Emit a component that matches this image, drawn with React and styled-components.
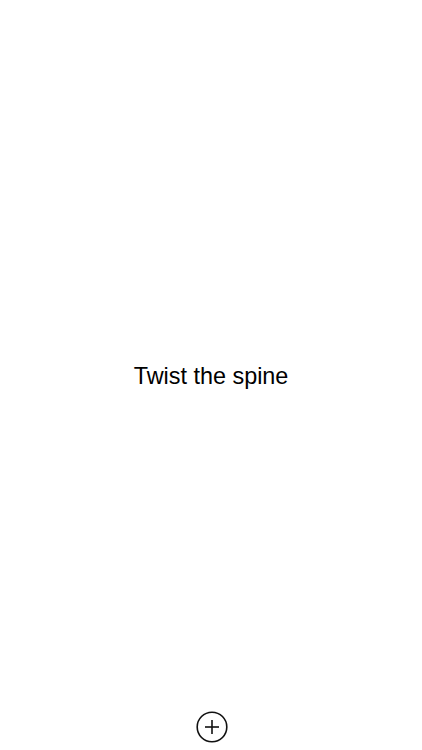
import React from 'react';
import styled, { createGlobalStyle } from 'styled-components';

const GlobalStyle = createGlobalStyle`
  html, body {
    margin: 0;
    padding: 0;
    background: #ffffff;
  }
  body {
    font-family: "Liberation Sans", Arial, sans-serif;
    color: #000;
  }
`;

const Screen = styled.div`
  height: 750px;
  width: 100%;
  display: grid;
  grid-template-rows: 1fr auto 1fr;
  justify-items: center;
`;

const Label = styled.h1`
  grid-row: 2;
  margin: 0;
  padding-top: 2px;
  font-size: 23.4px;
  line-height: 28px;
  font-weight: 400;
  letter-spacing: 0;
`;

const AddButton = styled.button`
  grid-row: 3;
  align-self: end;
  width: 32px;
  height: 32px;
  margin: 0 0 7px 1px;
  padding: 0;
  border: none;
  background: transparent;
  display: flex;
  align-items: center;
  justify-content: center;
  cursor: pointer;
`;

const PlusCircle = () => (
  <svg width="32" height="32" viewBox="0 0 32 32" fill="none" stroke="#111" strokeWidth="1.6">
    <circle cx="16" cy="16" r="14.8" />
    <line x1="9" y1="16" x2="23" y2="16" />
    <line x1="16" y1="9" x2="16" y2="23" />
  </svg>
);

const App = () => {
  return (
    <Screen>
      <GlobalStyle />
      <Label>Twist the spine</Label>
      <AddButton aria-label="Add">
        <PlusCircle />
      </AddButton>
    </Screen>
  );
};

export default App;
